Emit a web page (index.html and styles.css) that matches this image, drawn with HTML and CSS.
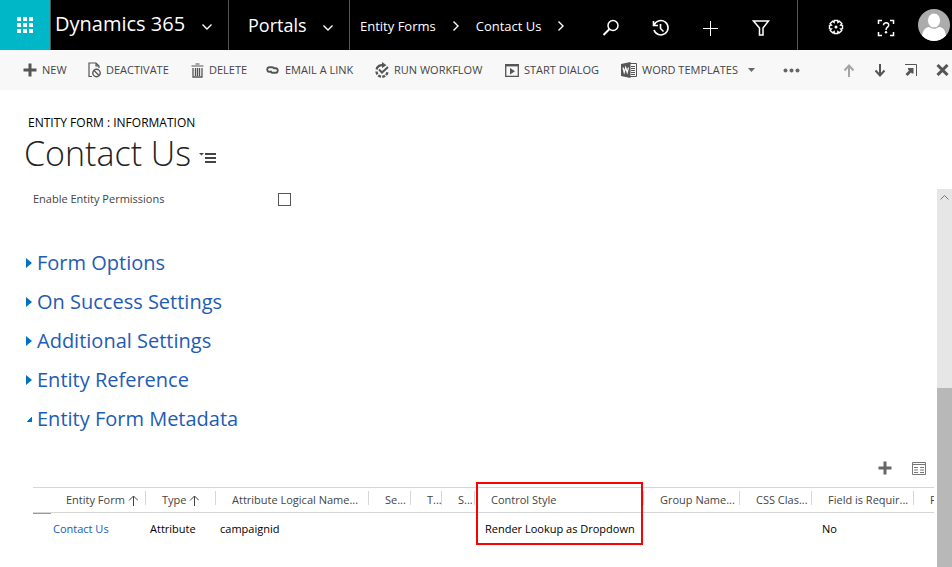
FILE: index.html
```html
<!DOCTYPE html>
<html lang="en">
<head>
<meta charset="utf-8">
<title>Contact Us - Dynamics 365</title>
<link rel="stylesheet" href="styles.css">
</head>
<body>
<header class="topbar">
  <button class="launcher" aria-label="Apps">
    <svg width="16" height="16" viewBox="0 0 16 16" fill="#fff"><path d="M0 0h4v4H0zM6 0h4v4H6zM12 0h4v4h-4zM0 6h4v4H0zM6 6h4v4H6zM12 6h4v4h-4zM0 12h4v4H0zM6 12h4v4H6zM12 12h4v4h-4z"/></svg>
  </button>
  <button class="brand">Dynamics 365
    <svg class="chev" width="10" height="6" viewBox="0 0 10 6"><path d="M.5.5 5 5 9.500.5"/></svg>
  </button>
  <button class="area">Portals
    <svg class="chev" width="10" height="6" viewBox="0 0 10 6"><path d="M.5.5 5 5 9.500.5"/></svg>
  </button>
  <nav class="crumbs" aria-label="Breadcrumb">
    <a href="#forms">Entity Forms</a>
    <svg class="chev" width="6" height="10" viewBox="0 0 6 10"><path d="M.5.5 5 5 .5 9.500"/></svg>
    <a href="#contact">Contact Us</a>
    <svg class="chev" width="6" height="10" viewBox="0 0 6 10"><path d="M.5.5 5 5 .5 9.500"/></svg>
  </nav>
  <div class="tools">
    <button aria-label="Search"><svg width="18" height="18" viewBox="0 0 18 18"><circle cx="11" cy="6.500" r="5"/><path d="M7.500 10 1.500 16" stroke-width="2"/></svg></button>
    <button aria-label="Recent"><svg width="18" height="18" viewBox="0 0 18 18"><path d="M2.200 6A7.200 7.200 0 1 1 2 11M1.500 2v4.500H6M8.500 5v4.500l3 3" stroke-width="1.600"/></svg></button>
    <button aria-label="Create"><svg width="16" height="16" viewBox="0 0 16 16"><path d="M7.500 1v15M0 8.500h15" stroke-width="1"/></svg></button>
    <button aria-label="Find"><svg width="18" height="18" viewBox="0 0 18 18"><path d="M1.500 2h15L11 9v7H7.500V9z"/></svg></button>
  </div>
  <div class="account">
    <button aria-label="Settings"><svg width="18" height="18" viewBox="0 0 18 18"><path d="M7.300 1.500h3.400l.2 1.900 1.500-1.200 2.400 2.400-1.200 1.500 1.900.2v3.400l-1.900.2 1.200 1.500-2.400 2.400-1.500-1.200-.2 1.900H7.300l-.2-1.900-1.500 1.200-2.400-2.400 1.200-1.500-1.900-.2V6.300l1.900-.2-1.200-1.500 2.400-2.400 1.500 1.200z" stroke-width="1.400"/><circle cx="9" cy="8" r="1.500" fill="#fff" stroke="none"/></svg></button>
    <button aria-label="Help"><svg width="18" height="18" viewBox="0 0 18 18"><path d="M1.500 5V1.500H5M13 1.500h3.500V5M16.500 13v3.500H13M5 16.500H1.500V13M6.500 6.300C6.500 2.800 12 3 11.700 6.300 11.600 8.300 9 8.200 9 11" /><circle cx="9" cy="13.300" r="1.200" fill="#fff" stroke="none"/></svg></button>
    <button class="avatar" aria-label="Profile"><svg width="32" height="32" viewBox="0 0 32 32"><circle cx="16" cy="16" r="16" fill="#acacac"/><path d="M4 26.500C5 20 9 18 11 18q5 3.500 10 0c3 0 6 2 7 8.500A16 16 0 0 1 4 26.500z" fill="#fff"/><ellipse cx="16" cy="11.500" rx="6.500" ry="7.500" fill="#fff" stroke="#acacac" stroke-width="1"/></svg></button>
  </div>
</header>

<div class="commands">
  <div class="actions">
    <button><svg width="14" height="14" viewBox="0 0 14 14"><path d="M7 .5v13M.5 7h13" stroke-width="3"/></svg>NEW</button>
    <button><svg width="13" height="16" viewBox="0 0 13 16"><path d="M4 14.500H1V1h7l3 3v2M8 1v3h3" stroke-width="1.200"/><circle cx="8.500" cy="11" r="3.700" stroke-width="1.400"/><path d="m6 8.500 5 5" stroke-width="1.300"/></svg>DEACTIVATE</button>
    <button><svg width="13" height="15" viewBox="0 0 13 15"><path d="M4.500 1h4M.5 3h12" stroke-width="1.200"/><path d="M2 5v9h9V5M4.500 5v8M6.500 5v8M8.500 5v8" stroke-width="1.300"/></svg>DELETE</button>
    <button><svg width="15" height="10" viewBox="0 0 15 10"><path d="M6.500 6.700H4A2.300 2.300 0 0 1 4 2.200h3q2 0 2.300 2M8.500 3.300H11a2.300 2.300 0 0 1 0 4.500H8q-2 0-2.300-2" stroke-width="1.900"/></svg>EMAIL A LINK</button>
    <button><svg width="14" height="16" viewBox="0 0 14 16"><path d="M1.500 7.500A5.500 5.500 0 0 1 8 3.200" stroke-width="2.200"/><path d="M7 0v6l4.500-2.800z" fill="#555" stroke="none"/><path d="m4 7.500 3 3L13 5" stroke-width="2"/><path d="M1.500 9.500A5.500 5.500 0 0 0 12.500 9" stroke-width="2.400" stroke-dasharray="3 1.200"/></svg>RUN WORKFLOW</button>
    <button><svg width="14" height="13" viewBox="0 0 14 13"><path d="M.7 1v11.300h12.600V1z" stroke-width="1.300"/><path d="M0 1.200h14" stroke-width="2.400"/><path d="M5 4v6.500l5-3.200z" fill="#555" stroke="none"/></svg>START DIALOG</button>
    <button><svg width="16" height="16" viewBox="0 0 16 16"><path d="M9 1.500h6.500v13H9M10 4.500h4M10 6.500h4M10 8.500h4M10 10.500h4M10 12.500h4" stroke-width="1"/><path d="M0 2 9.500 0v16L0 14z" fill="#555" stroke="none"/><path d="m2 5.500 1.200 5 1.500-5 1.500 5 1.300-5" stroke="#fff" stroke-width="1.200"/></svg>WORD TEMPLATES<svg class="drop" width="7" height="4" viewBox="0 0 7 4"><path d="M0 0h7L3.500 4z" fill="#666" stroke="none"/></svg></button>
    <button aria-label="More"><svg width="17" height="5" viewBox="0 0 17 5"><g fill="#666" stroke="none"><circle cx="2.500" cy="2.500" r="2"/><circle cx="8.500" cy="2.500" r="2"/><circle cx="14.500" cy="2.500" r="2"/></g></svg></button>
  </div>
  <div class="record-nav">
    <button class="off" aria-label="Previous"><svg width="12" height="13" viewBox="0 0 12 13"><path d="M6 13V2M1.500 6.500 6 1.500l4.500 5" stroke-width="2"/></svg></button>
    <button aria-label="Next"><svg width="12" height="13" viewBox="0 0 12 13"><path d="M6 0v11M1.500 6.500l4.500 5 4.500-5" stroke-width="2"/></svg></button>
    <button aria-label="Pop out"><svg width="12" height="12" viewBox="0 0 12 12"><path d="M0 .5h11.500V12" stroke-width="1"/><path d="M3 4h5.500v5.500H7L6 8.500 2.500 12 .5 10 4 6.500 3 5.500z" fill="#555" stroke="none"/></svg></button>
    <button aria-label="Close"><svg width="13" height="12" viewBox="0 0 13 12"><path d="m1.500 1 10 10m0-10-10 10" stroke-width="3"/></svg></button>
  </div>
</div>

<div class="heading">
  <p class="kind">ENTITY FORM : INFORMATION</p>
  <div class="title-row">
    <h1>Contact Us</h1>
    <button aria-label="Switch form"><svg width="18" height="12" viewBox="0 0 18 12"><path d="M0 1h5L2.500 3.500z" fill="#444"/><path d="M6 2h11M6 6h11M6 10h11" stroke="#444" stroke-width="2"/></svg></button>
  </div>
</div>

<div class="form-area">
  <main class="form">
    <div class="field">
      <label for="perm">Enable Entity Permissions</label>
      <input type="checkbox" id="perm">
    </div>
    <section class="sections">
      <button><i class="tri"></i>Form Options</button>
      <button><i class="tri"></i>On Success Settings</button>
      <button><i class="tri"></i>Additional Settings</button>
      <button><i class="tri"></i>Entity Reference</button>
      <button aria-expanded="true"><i class="tri-open"></i>Entity Form Metadata</button>
    </section>
    <div class="grid-tools">
      <button aria-label="Add record"><svg width="14" height="14" viewBox="0 0 14 14"><path d="M7 .5v13M.5 7h13" stroke="#666" stroke-width="3"/></svg></button>
      <button aria-label="Open view"><svg width="14" height="13" viewBox="0 0 14 13" fill="none" stroke="#777"><path d="M.5.5h13v12H.5zM.5 2.500h13"/><path d="M2 5.500h4M2 8h4M2 10.500h4M8 5.500h4M8 8h4M8 10.500h4"/></svg></button>
    </div>
    <div class="grid-wrap">
      <table>
        <colgroup><col class="w-form"><col class="w-type"><col class="w-attr"><col class="w-sec"><col class="w-tab"><col class="w-sub"><col class="w-style"><col class="w-group"><col class="w-css"><col class="w-req"><col class="w-last"></colgroup>
        <thead>
          <tr>
            <th class="first">Entity Form <svg width="10" height="11" viewBox="0 0 10 11"><path d="M5.500 11V1M1 5.500l4.500-4.500L10 5.500"/></svg></th>
            <th>Type <svg width="10" height="11" viewBox="0 0 10 11"><path d="M5.500 11V1M1 5.500l4.500-4.500L10 5.500"/></svg></th>
            <th>Attribute Logical Name...</th>
            <th>Se...</th>
            <th>T...</th>
            <th>S...</th>
            <th class="marked">Control Style</th>
            <th>Group Name...</th>
            <th>CSS Clas...</th>
            <th>Field is Requir...</th>
            <th>P</th>
          </tr>
        </thead>
        <tbody>
          <tr>
            <td class="first"><a href="#record">Contact Us</a></td>
            <td>Attribute</td>
            <td>campaignid</td>
            <td></td><td></td><td></td>
            <td class="inset">Render Lookup as Dropdown</td>
            <td></td><td></td>
            <td class="inset">No</td>
            <td></td>
          </tr>
        </tbody>
      </table>
    </div>
  </main>
  <div class="scroll" aria-hidden="true">
    <svg width="9" height="5" viewBox="0 0 9 5"><path d="M.5 4.500l4-4 4 4"/></svg>
    <div class="thumb"></div>
  </div>
</div>
</body>
</html>
```

FILE: styles.css
```css
*, *::after { box-sizing: border-box; }
body {
  margin: 0;
  min-height: 100vh;
  display: flex;
  flex-direction: column;
  background: #fff;
  color: #000;
  font: 11px/16px "Open Sans", "Noto Sans", sans-serif;
  overflow: hidden;
}
button {
  border: 0;
  padding: 0;
  background: none;
  color: inherit;
  font: inherit;
  display: flex;
  align-items: center;
  white-space: nowrap;
}
a { text-decoration: none; }
svg { flex: none; display: block; }

.topbar {
  display: flex;
  height: 50px;
  background: #000;
  color: #fff;
}
.launcher {
  width: 50px;
  justify-content: center;
  background: #00b7c7;
}
.brand, .area {
  justify-content: space-between;
  border-left: 1px solid #555;
}
.brand { width: 178px; padding: 0 16px 2px 4px; font-size: 20px; }
.area { width: 121px; padding: 0 16px 0 19px; font-size: 18px; }
.brand .chev, .area .chev { margin-top: 6px; }
.chev { fill: none; stroke: #fff; stroke-width: 1.4; }
.crumbs {
  display: flex;
  align-items: center;
  gap: 17px;
  padding: 2px 0 0 10px;
  border-left: 1px solid #555;
  font-size: 13px;
}
.crumbs a { color: #fff; }
.tools, .account { display: flex; }
.tools { margin-left: auto; padding-right: 11px; }
.account {
  border-left: 1px solid #555;
  padding: 0 2px 0 13px;
}
.tools button, .account button {
  width: 50px;
  justify-content: center;
  padding-top: 6px;
}
.tools svg, .account svg { fill: none; stroke: #fff; stroke-width: 1.5; }
.account .avatar { width: 39px; padding: 0; justify-content: flex-end; }
.account .avatar svg { stroke: none; }

.commands {
  display: flex;
  justify-content: space-between;
  height: 40px;
  background: #f8f8f8;
  color: #444;
}
.actions {
  display: grid;
  grid-template-columns: 65px 103px 74px 110px 130px 116px 162px 17px;
  padding-left: 23px;
}
.actions button { gap: 5px; }
.commands svg { fill: none; stroke: #555; }
.actions .drop { margin-left: 5px; }
.record-nav { display: flex; gap: 19px; padding-right: 3px; }
.record-nav .off { opacity: .5; }

.heading { height: 99px; padding: 24px 24px 0; }
.kind {
  margin: 0;
  padding-left: 4px;
  font-size: 12px;
  line-height: 18px;
}
.title-row { display: flex; align-items: center; gap: 8px; }
.title-row button { padding-top: 10px; }
h1 {
  margin: 0;
  color: #222;
  font-size: 34px;
  line-height: 42px;
  font-weight: 300;
}

.form-area { display: flex; flex: 1; }
.form { flex: 1; min-width: 0; }
.field {
  display: grid;
  grid-template-columns: 245px 13px;
  align-items: center;
  height: 20px;
  padding-left: 33px;
  color: #444;
}
.field input {
  appearance: none;
  width: 13px;
  height: 13px;
  margin: 0;
  border: 1px solid #555;
  background: #fff;
}
.sections { padding: 34px 0 0 26px; }
.sections button {
  height: 39px;
  gap: 5px;
  color: #1e5cb3;
  font-size: 20px;
}
.tri {
  border: solid transparent;
  border-width: 5px 0 5px 6px;
  border-left-color: #0072c6;
}
.tri-open {
  width: 6px;
  height: 6px;
  background: linear-gradient(135deg, transparent 50%, #0072c6 50%);
}
.grid-tools {
  display: flex;
  justify-content: flex-end;
  gap: 20px;
  height: 30px;
  margin-top: 15px;
  padding-right: 11px;
}
.grid-wrap {
  margin: -4px 3px 0 33px;
  padding: 8px 0;
  overflow: hidden;
}
table {
  width: 970px;
  table-layout: fixed;
  border-collapse: separate;
  border-spacing: 0;
}
.w-form { width: 113px; }
.w-type { width: 70px; }
.w-attr { width: 153px; }
.w-sec { width: 42px; }
.w-tab { width: 31px; }
.w-sub { width: 33px; }
.w-style { width: 169px; }
.w-group { width: 96px; }
.w-css { width: 72px; }
.w-req { width: 102px; }
th {
  height: 26px;
  padding: 0 0 0 16px;
  border: solid #d6d6d6;
  border-width: 1px 0;
  background: linear-gradient(#d6d6d6, #d6d6d6) right 3px / 1px 14px no-repeat;
  color: #444;
  font-weight: 400;
  text-align: left;
  white-space: nowrap;
}
th.first { padding-left: 33px; }
th svg { display: inline-block; fill: none; stroke: #444; vertical-align: -2px; }
td { height: 32px; padding: 0 0 0 4px; white-space: nowrap; }
td.first {
  padding-left: 20px;
  background: linear-gradient(#999, #999) left top / 18px 1px no-repeat;
}
td.inset { padding-left: 10px; }
td a { color: #1160b7; }
.marked { position: relative; }
.marked::after {
  content: "";
  position: absolute;
  inset: -6px 1px auto 1px;
  height: 63px;
  border: 2px solid #f00;
}
.scroll {
  width: 15px;
  display: flex;
  flex-direction: column;
  align-items: center;
  justify-content: space-between;
  padding-top: 6px;
  background: #e6e6e6;
}
.scroll svg { fill: none; stroke: #777; }
.thumb { width: 100%; height: 48%; background: #b8b8b8; }
```
